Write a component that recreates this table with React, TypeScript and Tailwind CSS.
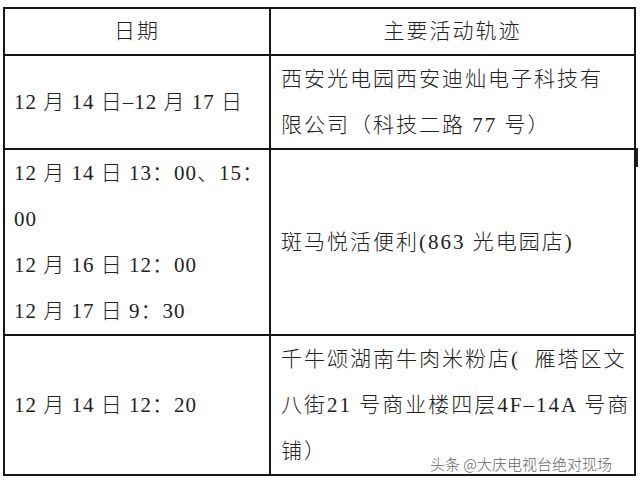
const rows = [
  {
    left: ["12 月 14 日–12 月 17 日"],
    right: ["西安光电园西安迪灿电子科技有", "限公司（科技二路 77 号）"],
    rightCenter: false,
  },
  {
    left: ["12 月 14 日 13：00、15：", "00", "12 月 16 日 12：00", "12 月 17 日 9：30"],
    right: ["斑马悦活便利(863 光电园店)"],
    rightCenter: true,
  },
  {
    left: ["12 月 14 日 12：20"],
    right: ["千牛颂湖南牛肉米粉店(\u00a0\u00a0雁塔区文", "八街21 号商业楼四层4F–14A 号商", "铺）"],
    rightCenter: false,
  },
];

const App = () => {
  return (
    <div className="relative w-[640px] h-[485px] bg-white pt-[7px] pl-[3px] text-[#222] font-light font-['Liberation_Serif','Noto_Sans_CJK_SC',serif] text-[21px]">
      <div className="w-[633px] border-2 border-[#161616]">
        {/* Header */}
        <div className="flex border-b-2 border-[#161616] leading-[45px] tracking-[2px]">
          <div className="w-[266px] shrink-0 border-r-2 border-[#161616] text-center">日期</div>
          <div className="flex-1 text-center">主要活动轨迹</div>
        </div>

        {rows.map((row, i) => (
          <div
            key={i}
            className={i < rows.length - 1 ? "flex border-b-2 border-[#161616]" : "flex"}
          >
            <div className="w-[266px] shrink-0 border-r-2 border-[#161616] pl-[9px] flex flex-col justify-center leading-[46px] tracking-[1px] whitespace-nowrap">
              {row.left.map((line, j) => (
                <div key={j}>{line}</div>
              ))}
            </div>
            <div
              className={
                row.rightCenter
                  ? "flex-1 pl-[10px] flex flex-col justify-center leading-[46px] tracking-[2px] whitespace-nowrap"
                  : "flex-1 pl-[10px] flex flex-col leading-[46px] tracking-[2px] whitespace-nowrap"
              }
            >
              {row.right.map((line, j) => (
                <div key={j}>{line}</div>
              ))}
            </div>
          </div>
        ))}
      </div>

      {/* scan mark on right edge */}
      <div className="absolute left-[636px] top-[148px] w-[2px] h-[19px] bg-[#222]" />

      {/* watermark */}
      <div className="absolute left-[430px] top-[454px] text-[15px] leading-[20px] text-[#666] font-['Noto_Sans_CJK_SC',sans-serif] [text-shadow:0_0_2px_#fff,0_0_2px_#fff]">
        头条 @大庆电视台绝对现场
      </div>
    </div>
  );
};

export default App;
